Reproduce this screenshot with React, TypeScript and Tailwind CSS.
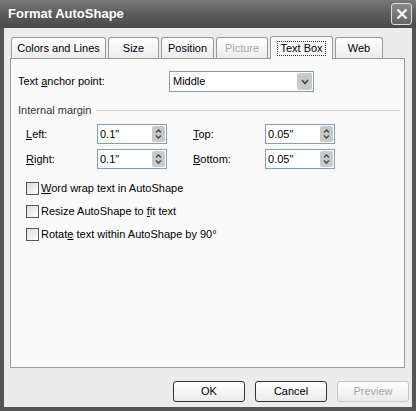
import React from "react"

const tabs = [
  { label: "Colors and Lines", w: "w-[95px]" },
  { label: "Size", w: "w-[51px]" },
  { label: "Position", w: "w-[53px]" },
  { label: "Picture", w: "w-[52px]", disabled: true },
  { label: "Text Box", w: "w-[63px]", active: true },
  { label: "Web", w: "w-[48px]" },
]

function Spin({ value }: { value: string }) {
  return (
    <div className="flex h-[20px] w-[70px] items-center border border-[#7f9db9] bg-white pl-[2px]">
      <span className="flex-1">{value}</span>
      <div className="mr-[1px] flex h-[16px] w-[13px] flex-col items-center justify-center rounded-[2px] bg-[#c9c9c9] text-[#555]">
        <svg width="7" height="12" viewBox="0 0 7 12">
          <path d="M1 4.5 L3.5 2 L6 4.5 M1 7.5 L3.5 10 L6 7.5" fill="none" stroke="#444" strokeWidth="1.4" />
        </svg>
      </div>
    </div>
  )
}

function Check({ children }: { children: React.ReactNode }) {
  return (
    <div className="flex h-[23px] items-center gap-[2px]">
      <div className="h-[13px] w-[13px] border border-[#555] bg-gradient-to-br from-[#dcdcdc] to-white" />
      <span>{children}</span>
    </div>
  )
}

function Btn({ label, disabled }: { label: string; disabled?: boolean }) {
  return (
    <div
      className={
        "flex h-[21px] w-[72px] items-center justify-center rounded-[3px] border bg-gradient-to-b from-white to-[#eaeaea] " +
        (disabled ? "border-[#c8c8c8] text-[#a8a8a8]" : "border-[#333] text-black")
      }
    >
      {label}
    </div>
  )
}

export default function App() {
  return (
    <div
      className="flex h-[411px] w-[416px] flex-col bg-[#555] px-[4px] pb-[4px] text-[11px] text-black"
      style={{ fontFamily: '"Liberation Sans", Arial, sans-serif' }}
    >
      {/* title bar */}
      <div className="-mx-[4px] flex h-[28px] items-center justify-between bg-gradient-to-b from-[#7a7a7a] via-[#5c5c5c] to-[#4a4a4a] pl-[8px] pr-[4px]">
        <span className="text-[13px] font-bold text-white">Format AutoShape</span>
        <div className="flex h-[22px] w-[21px] items-center justify-center rounded-[3px] border border-[#ddd] bg-gradient-to-b from-[#8a8a8a] to-[#666]">
          <svg width="12" height="12" viewBox="0 0 12 12">
            <path d="M1.5 1.5 L10.5 10.5 M10.5 1.5 L1.5 10.5" stroke="#f4f4f4" strokeWidth="2.4" />
          </svg>
        </div>
      </div>

      <div className="flex flex-1 flex-col bg-[#ececec] pl-[6px] pr-[7px] pt-[8px]">
        {/* tabs */}
        <div className="flex h-[22px] items-end gap-[2px] pl-[1px]">
          {tabs.map((t) => (
            <div
              key={t.label}
              className={
                "flex items-center justify-center rounded-t-[3px] border border-b-0 border-[#9a9a9a] " +
                t.w +
                (t.active ? " h-[23px] bg-[#fafafa] -mb-[1px] z-10" : " h-[21px] bg-gradient-to-b from-white to-[#ececec]") +
                (t.disabled ? " text-[#aaa]" : "")
              }
            >
              <span className={t.active ? "border border-dotted border-[#333] px-[2px] leading-[13px]" : ""}>{t.label}</span>
            </div>
          ))}
        </div>

        {/* panel */}
        <div className="flex h-[310px] flex-col border border-[#9a9a9a] bg-[#fafafa] pl-[7px] pr-[4px] pt-[12px]">
          <div className="flex h-[21px] items-center">
            <span className="w-[151px]">
              Text <u>a</u>nchor point:
            </span>
            <div className="flex h-[21px] w-[145px] items-center border border-[#7f9db9] bg-white pl-[3px]">
              <span className="flex-1">Middle</span>
              <div className="mr-[1px] flex h-[17px] w-[15px] items-center justify-center rounded-[2px] bg-[#c9c9c9]">
                <svg width="8" height="6" viewBox="0 0 8 6">
                  <path d="M1 1 L4 4.5 L7 1" fill="none" stroke="#444" strokeWidth="1.6" />
                </svg>
              </div>
            </div>
          </div>

          <div className="mt-[10px] flex h-[16px] items-center gap-[5px] text-[#333]">
            <span>Internal margin</span>
            <div className="h-px flex-1 bg-[#cfcfcf]" />
          </div>

          <div className="mt-[6px] flex flex-col gap-[5px] pl-[8px]">
            <div className="flex items-center">
              <span className="w-[71px]">
                <u>L</u>eft:
              </span>
              <Spin value={'0.1"'} />
              <span className="ml-[26px] w-[72px]">
                <u>T</u>op:
              </span>
              <Spin value={'0.05"'} />
            </div>
            <div className="flex items-center">
              <span className="w-[71px]">
                <u>R</u>ight:
              </span>
              <Spin value={'0.1"'} />
              <span className="ml-[26px] w-[72px]">
                <u>B</u>ottom:
              </span>
              <Spin value={'0.05"'} />
            </div>
          </div>

          <div className="mt-[8px] flex flex-col pl-[8px]">
            <Check>
              <u>W</u>ord wrap text in AutoShape
            </Check>
            <Check>
              Resize AutoShape to <u>f</u>it text
            </Check>
            <Check>
              Rotat<u>e</u> text within AutoShape by 90°
            </Check>
          </div>
        </div>

        {/* buttons */}
        <div className="-mr-[4px] mt-[13px] flex justify-end gap-[10px]">
          <Btn label="OK" />
          <Btn label="Cancel" />
          <Btn label="Preview" disabled />
        </div>
      </div>
    </div>
  )
}
